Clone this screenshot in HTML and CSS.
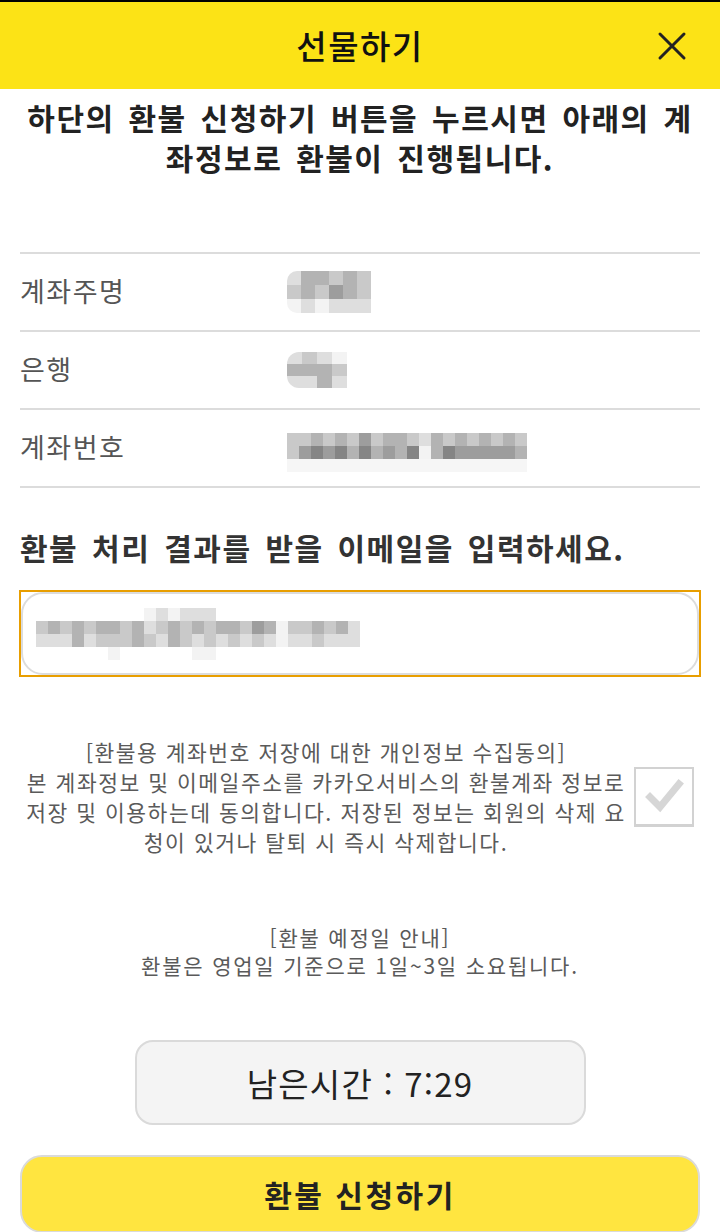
FILE: index.html
```html
<!DOCTYPE html>
<html lang="ko">
<head>
<meta charset="utf-8">
<title>선물하기</title>
<link rel="stylesheet" href="styles.css">
</head>
<body>
<div class="page">
  <header class="topbar">
    <span></span>
    <h1 class="title">선물하기</h1>
    <button class="close" aria-label="닫기">
      <svg width="30" height="30" viewBox="0 0 30 30"><path d="M3 3 L27 27 M27 3 L3 27" stroke="#222" stroke-width="3" stroke-linecap="round" fill="none"/></svg>
    </button>
  </header>

  <p class="intro">하단의 환불 신청하기 버튼을 누르시면 아래의 계<br>좌정보로 환불이 진행됩니다.</p>

  <div class="info">
    <div class="row">
      <span class="label">계좌주명</span>
      <div class="mosaic m-name">
        <div class="mr"><i class="s1"></i><i class="s3"></i><i class="s3"></i><i class="s2"></i><i class="s3"></i><i class="s2"></i></div>
        <div class="mr"><i class="s2"></i><i class="s3"></i><i class="s2"></i><i class="s4"></i><i class="s3"></i><i class="s2"></i></div>
        <div class="mr"><i class="s0"></i><i class="s1"></i><i class="s0"></i><i class="s1"></i><i class="s1"></i><i class="s1"></i></div>
      </div>
    </div>
    <div class="row">
      <span class="label">은행</span>
      <div class="mosaic m-bank">
        <div class="mr"><i class="s1"></i><i class="s2"></i><i class="s1"></i><i class="s0"></i></div>
        <div class="mr"><i class="s3"></i><i class="s3"></i><i class="s3"></i><i class="s2"></i></div>
        <div class="mr"><i class="s1"></i><i class="s1"></i><i class="s3"></i><i class="s1"></i></div>
      </div>
    </div>
    <div class="row">
      <span class="label">계좌번호</span>
      <div class="mosaic m-acct">
        <div class="mr"><i class="s2"></i><i class="s2"></i><i class="s3"></i><i class="s2"></i><i class="s3"></i><i class="s2"></i><i class="s4"></i><i class="s2"></i><i class="s3"></i><i class="s3"></i><i class="s2"></i><i class="s1"></i><i class="s3"></i><i class="s2"></i><i class="s3"></i><i class="s2"></i><i class="s3"></i><i class="s2"></i><i class="s3"></i><i class="s2"></i></div>
        <div class="mr"><i class="s2"></i><i class="s4"></i><i class="s5"></i><i class="s4"></i><i class="s5"></i><i class="s3"></i><i class="s5"></i><i class="s3"></i><i class="s4"></i><i class="s3"></i><i class="s5"></i><i class="s0"></i><i class="s3"></i><i class="s5"></i><i class="s4"></i><i class="s4"></i><i class="s4"></i><i class="s4"></i><i class="s4"></i><i class="s3"></i></div>
        <div class="mr faint"></div>
      </div>
    </div>
  </div>

  <h2 class="prompt">환불 처리 결과를 받을 이메일을 입력하세요.</h2>

  <div class="email-frame">
    <div class="email-field">
      <div class="mosaic m-mail">
        <div class="mr"><i class="e"></i><i class="e"></i><i class="e"></i><i class="e"></i><i class="e"></i><i class="e"></i><i class="e"></i><i class="e"></i><i class="e"></i><i class="s0"></i><i class="s1"></i><i class="s0"></i><i class="s1"></i><i class="s1"></i><i class="s1"></i></div>
        <div class="mr"><i class="s2"></i><i class="s3"></i><i class="s2"></i><i class="s3"></i><i class="s2"></i><i class="s3"></i><i class="s3"></i><i class="s2"></i><i class="s3"></i><i class="s1"></i><i class="s2"></i><i class="s3"></i><i class="s2"></i><i class="s3"></i><i class="s2"></i><i class="s3"></i><i class="s3"></i><i class="s2"></i><i class="s4"></i><i class="s3"></i><i class="s0"></i><i class="s2"></i><i class="s2"></i><i class="s3"></i><i class="s2"></i><i class="s3"></i><i class="s1"></i></div>
        <div class="mr"><i class="s1"></i><i class="s1"></i><i class="s1"></i><i class="s3"></i><i class="s1"></i><i class="s2"></i><i class="s2"></i><i class="s2"></i><i class="s3"></i><i class="s2"></i><i class="s1"></i><i class="s3"></i><i class="s2"></i><i class="s1"></i><i class="s2"></i><i class="s1"></i><i class="s2"></i><i class="s1"></i><i class="s2"></i><i class="s1"></i><i class="s0"></i><i class="s1"></i><i class="s1"></i><i class="s2"></i><i class="s1"></i><i class="s1"></i><i class="s1"></i></div>
        <div class="mr"><i class="e"></i><i class="e"></i><i class="e"></i><i class="e"></i><i class="e"></i><i class="e"></i><i class="s0"></i><i class="e"></i><i class="e"></i><i class="e"></i><i class="e"></i><i class="e"></i><i class="e"></i><i class="s0"></i><i class="s0"></i></div>
      </div>
    </div>
  </div>

  <div class="consent">
    <p class="consent-text">[환불용 계좌번호 저장에 대한 개인정보 수집동의]<br>본 계좌정보 및 이메일주소를 카카오서비스의 환불계좌 정보로<br>저장 및 이용하는데 동의합니다. 저장된 정보는 회원의 삭제 요<br>청이 있거나 탈퇴 시 즉시 삭제합니다.</p>
    <div class="checkbox">
      <svg width="55" height="55" viewBox="0 0 55 55"><path d="M13 28 L23 38 L42 15" stroke="#d6d6d6" stroke-width="7" fill="none" stroke-linecap="square"/></svg>
    </div>
  </div>

  <p class="notice">[환불 예정일 안내]<br>환불은 영업일 기준으로 1일~3일 소요됩니다.</p>

  <div class="timer">남은시간 : 7:29</div>

  <button class="submit">환불 신청하기</button>
</div>
</body>
</html>
```
FILE: styles.css
```css
* { box-sizing: border-box; }
html, body { margin: 0; padding: 0; background: #fff; }
body {
  font-family: "Noto Sans CJK KR", "Noto Sans", sans-serif;
  color: #222;
  width: 720px;
  overflow: hidden;
}
.page { width: 720px; }

.topbar {
  display: grid;
  grid-template-columns: 1fr auto 1fr;
  align-items: center;
  height: 89px;
  border-top: 2px solid #000;
  background: #fce316;
}
.title {
  margin: 0;
  font-size: 33px;
  font-weight: 500;
  letter-spacing: 1.5px;
  color: #111;
  line-height: 1;
}
.close {
  justify-self: end;
  margin-right: 33px;
  padding: 0;
  border: 0;
  background: none;
  display: flex;
  width: 30px;
  height: 30px;
}

.intro {
  margin: 8px 0 0;
  text-align: center;
  font-size: 30px;
  line-height: 40px;
  font-weight: 700;
  word-spacing: 4px;
  letter-spacing: 1.5px;
  color: #222;
}

.info {
  margin: 75px 20px 0;
  border-bottom: 2px solid #dcdcdc;
}
.row {
  display: flex;
  align-items: center;
  height: 78px;
  border-top: 2px solid #dcdcdc;
}
.label {
  width: 267px;
  font-size: 27px;
  letter-spacing: 1.5px;
  color: #555;
  margin-top: -4px;
}

.mosaic { display: flex; flex-direction: column; }
.mr { display: flex; }
.mr i { display: block; flex: none; }
.s0 { background: #f3f3f3; }
.s1 { background: #dedede; }
.s2 { background: #c9c9c9; }
.s3 { background: #b3b3b3; }
.s4 { background: #9d9d9d; }
.s5 { background: #858585; }
.e { background: transparent; }

.m-name { border-radius: 10px 0 0 10px; overflow: hidden; }
.m-name i { width: 14px; height: 14px; }
.m-bank { border-radius: 12px 0 0 12px; overflow: hidden; }
.m-bank i { width: 15px; height: 12px; }
.m-acct { margin-top: 8px; }
.m-acct i { width: 12px; height: 13px; }
.m-acct .faint { width: 240px; height: 13px; background: #f6f6f6; }
.m-mail i { width: 12px; height: 13px; }

.prompt {
  margin: 39px 20px 0;
  font-size: 30px;
  line-height: 40px;
  font-weight: 700;
  word-spacing: 4px;
  letter-spacing: 1.5px;
  color: #333;
}

.email-frame {
  margin: 23px 19px 0;
  height: 87px;
  border: 2px solid #e89e00;
}
.email-field {
  height: 100%;
  border: 2px solid #dcdcdc;
  border-radius: 22px;
  background: #fff;
  display: flex;
  align-items: center;
  padding-left: 13px;
}

.consent {
  display: flex;
  align-items: center;
  margin-top: 60px;
  padding-left: 20px;
}
.consent-text {
  margin: 0;
  width: 612px;
  text-align: center;
  font-size: 21.5px;
  line-height: 30px;
  letter-spacing: 1.5px;
  color: #5a5a5a;
}
.checkbox {
  width: 60px;
  height: 60px;
  margin-left: 2px;
  border: 2px solid #d2d2d2;
  border-bottom-width: 3px;
  display: flex;
  align-items: center;
  justify-content: center;
}

.notice {
  margin: 66px 0 0;
  text-align: center;
  font-size: 21px;
  line-height: 28px;
  letter-spacing: 1.8px;
  color: #5a5a5a;
}

.timer {
  margin: 61px auto 0;
  width: 451px;
  height: 85px;
  border: 2px solid #dadada;
  border-radius: 18px;
  background: #f4f4f4;
  display: flex;
  align-items: center;
  justify-content: center;
  font-size: 33px;
  letter-spacing: 1.2px;
  color: #222;
}

.submit {
  display: flex;
  align-items: center;
  justify-content: center;
  margin: 30px 20px 0;
  width: 680px;
  height: 78px;
  border: 2px solid #dadada;
  border-radius: 22px;
  background: #ffe540;
  font-family: inherit;
  font-size: 30px;
  font-weight: 700;
  letter-spacing: 2.5px;
  color: #222;
  padding: 0;
}
```
